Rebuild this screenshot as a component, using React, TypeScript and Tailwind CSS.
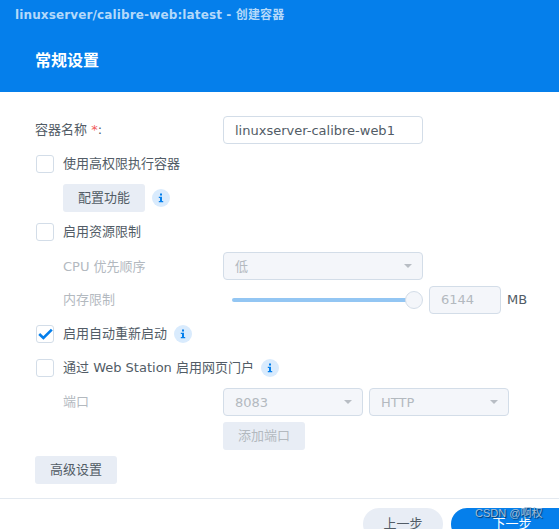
const font = "[font-family:'DejaVu_Sans','Noto_Sans_CJK_SC',sans-serif]"

function Info() {
    return (
        <span className="flex h-[18px] w-[18px] items-center justify-center rounded-full bg-[#d9ebfd]">
            <svg width="8" height="10" viewBox="0 0 8 10" fill="#057feb">
                <rect x="3" y="0.5" width="2" height="2" />
                <path d="M1.8 3.8H5v4.2h1.2v1.3H1.8V8H3V5.1H1.8z" />
            </svg>
        </span>
    )
}

function Check({ label, checked, info }: { label: string; checked?: boolean; info?: boolean }) {
    return (
        <div className="flex h-7 items-center pl-px">
            <span className="flex h-[18px] w-[18px] items-center justify-center rounded-[3px] border border-[#d3dde8] bg-white">
                {checked && (
                    <svg width="15" height="12" viewBox="0 0 15 12" fill="none">
                        <path d="M1.2 6 5.4 10 13.8 1.6" stroke="#057feb" strokeWidth="2.6" />
                    </svg>
                )}
            </span>
            <span className="ml-[9px] mr-[7px] text-[#525c66]">{label}</span>
            {info && <Info />}
        </div>
    )
}

function Select({ value, className }: { value: string; className: string }) {
    return (
        <div className={`flex h-7 items-center justify-between rounded-[4px] border border-[#d3dde8] bg-[#f4f6fa] pl-[11px] pr-[10px] text-[#b3b9bf] ${className}`}>
            <span className="pt-px">{value}</span>
            <span className="h-0 w-0 border-x-[4px] border-t-[4px] border-x-transparent border-t-[#b8bdc4]" />
        </div>
    )
}

function Btn({ label, disabled }: { label: string; disabled?: boolean }) {
    return (
        <div className={`flex h-7 w-[82px] items-center justify-center rounded-[3px] bg-[#e8edf5] ${disabled ? "text-[#b3b9bf]" : "text-[#525c66]"}`}>
            {label}
        </div>
    )
}

export default function App() {
    return (
        <div className={`relative h-[529px] w-[559px] overflow-hidden bg-white text-[13px] ${font}`}>
            <header className="h-[92px] bg-[#057feb] pl-[15px] pt-[6px]">
                <div className="text-[12px] font-bold leading-[18px] tracking-[0.13px] text-[#b4d9fa]">linuxserver/calibre-web:latest - 创建容器</div>
                <h1 className="mt-[25px] pl-[20px] text-[16px] font-bold leading-6 text-white">常规设置</h1>
            </header>

            <main className="flex flex-col gap-1.5 pl-[35px] pt-6">
                <div className="flex h-7 items-center">
                    <label className="w-[188px] text-[#525c66]">
                        容器名称 <span className="text-[#f25a5a]">*</span>:
                    </label>
                    <div className="flex h-7 w-[200px] items-center rounded-[4px] border border-[#d3dde8] pl-[11px] pt-px text-[#525c66]">linuxserver-calibre-web1</div>
                </div>

                <Check label="使用高权限执行容器" />
                <div className="ml-7 flex h-7 items-center gap-[7px]">
                    <Btn label="配置功能" />
                    <Info />
                </div>

                <Check label="启用资源限制" />
                <div className="flex h-7 items-center">
                    <span className="w-[188px] pl-7 pt-px text-[#b3b9bf]">CPU 优先顺序</span>
                    <Select value="低" className="w-[200px]" />
                </div>
                <div className="flex h-7 items-center">
                    <span className="w-[188px] pl-7 text-[#b3b9bf]">内存限制</span>
                    <div className="relative ml-[9px] mr-[6px] h-[4px] w-[182px] rounded-full bg-[#93c6f3]">
                        <span className="absolute right-[-9px] top-[-7px] h-[18px] w-[18px] rounded-full border border-[#d3dde8] bg-[#f4f6fa]" />
                    </div>
                    <div className="ml-[9px] flex h-7 w-[72px] items-center rounded-[4px] border border-[#d3dde8] bg-[#f4f6fa] pl-[11px] text-[#b3b9bf]">6144</div>
                    <span className="ml-[6px] text-[#525c66]">MB</span>
                </div>

                <Check label="启用自动重新启动" checked info />
                <Check label="通过 Web Station 启用网页门户" info />
                <div className="flex h-7 items-center">
                    <span className="w-[188px] pl-7 text-[#b3b9bf]">端口</span>
                    <div className="flex gap-1.5">
                        <Select value="8083" className="w-[140px]" />
                        <Select value="HTTP" className="w-[140px]" />
                    </div>
                </div>
                <div className="ml-[188px]">
                    <Btn label="添加端口" disabled />
                </div>
                <Btn label="高级设置" />
            </main>

            <footer className="mt-[14px] flex gap-2 border-t border-[#e3e9f0] pl-[363px] pt-[9px]">
                <div className="flex h-8 w-20 shrink-0 items-center justify-center rounded-full bg-[#e8edf5] text-[#525c66]">上一步</div>
                <div className="flex h-8 w-[122px] shrink-0 items-center justify-center rounded-full bg-[#057feb] text-white">下一步</div>
            </footer>

            <div className="absolute left-[475px] top-[505px] text-[11px] leading-[16px] text-[#a5bdd4] [font-family:'Liberation_Sans','Noto_Sans_CJK_SC',sans-serif] [text-shadow:1px_1px_1px_rgba(0,0,0,0.6)]">CSDN @啊权</div>
        </div>
    )
}
